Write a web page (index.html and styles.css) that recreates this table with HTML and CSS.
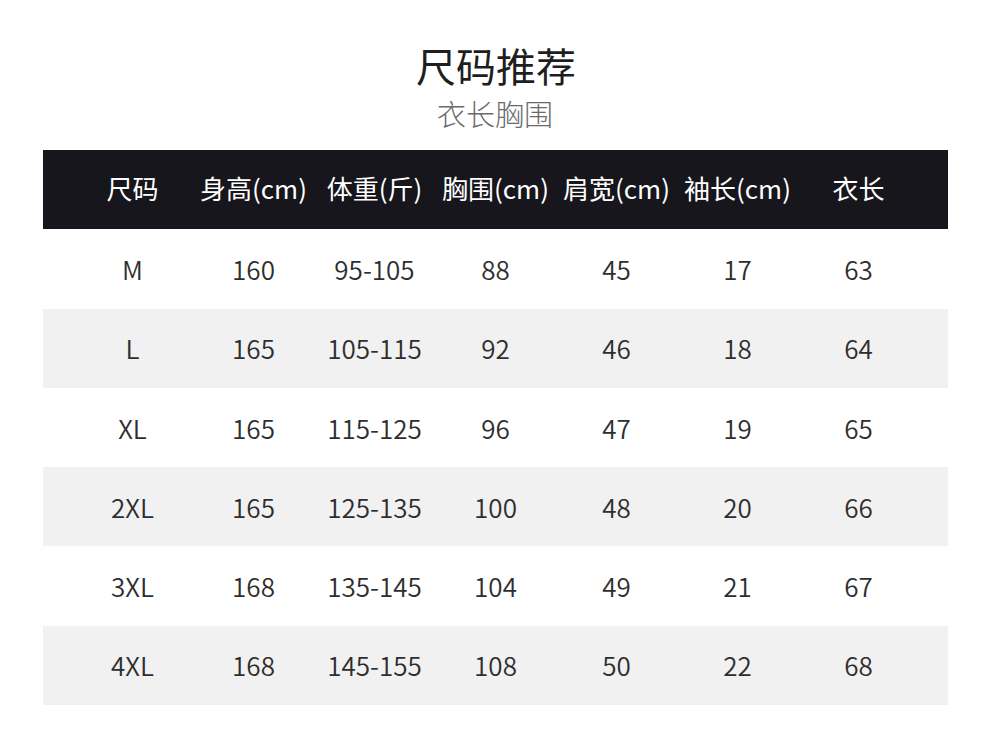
FILE: index.html
```html
<!DOCTYPE html>
<html lang="zh-CN">
<head>
<meta charset="utf-8">
<link rel="stylesheet" href="styles.css">
</head>
<body>
<div class="page">
  <h1 class="title">尺码推荐</h1>
  <p class="subtitle">衣长胸围</p>
  <div class="table">
    <div class="row head">
      <div class="cell">尺码</div><div class="cell">身高(cm)</div><div class="cell">体重(斤)</div><div class="cell">胸围(cm)</div><div class="cell">肩宽(cm)</div><div class="cell">袖长(cm)</div><div class="cell">衣长</div>
    </div>
    <div class="row">
      <div class="cell">M</div><div class="cell">160</div><div class="cell">95-105</div><div class="cell">88</div><div class="cell">45</div><div class="cell">17</div><div class="cell">63</div>
    </div>
    <div class="row alt">
      <div class="cell">L</div><div class="cell">165</div><div class="cell">105-115</div><div class="cell">92</div><div class="cell">46</div><div class="cell">18</div><div class="cell">64</div>
    </div>
    <div class="row">
      <div class="cell">XL</div><div class="cell">165</div><div class="cell">115-125</div><div class="cell">96</div><div class="cell">47</div><div class="cell">19</div><div class="cell">65</div>
    </div>
    <div class="row alt">
      <div class="cell">2XL</div><div class="cell">165</div><div class="cell">125-135</div><div class="cell">100</div><div class="cell">48</div><div class="cell">20</div><div class="cell">66</div>
    </div>
    <div class="row">
      <div class="cell">3XL</div><div class="cell">168</div><div class="cell">135-145</div><div class="cell">104</div><div class="cell">49</div><div class="cell">21</div><div class="cell">67</div>
    </div>
    <div class="row alt">
      <div class="cell">4XL</div><div class="cell">168</div><div class="cell">145-155</div><div class="cell">108</div><div class="cell">50</div><div class="cell">22</div><div class="cell">68</div>
    </div>
  </div>
</div>
</body>
</html>
```
FILE: styles.css
```css
html, body {
  margin: 0;
  padding: 0;
  background: #ffffff;
}
body {
  font-family: "Noto Sans CJK SC", "Noto Sans", sans-serif;
  color: #2b2b2b;
}
.page {
  width: 990px;
  height: 746px;
  padding-top: 40px;
  box-sizing: border-box;
}
.title {
  margin: 0;
  text-align: center;
  font-size: 40px;
  font-weight: 400;
  line-height: 50px;
  color: #1e1e1e;
  padding-left: 2px;
}
.subtitle {
  margin: 5px 0 0;
  text-align: center;
  font-size: 29px;
  font-weight: 300;
  line-height: 36px;
  color: #6a6a6a;
}
.table {
  margin: 19px 0 0 43px;
  width: 905px;
}
.row {
  display: grid;
  grid-template-columns: repeat(7, 121px);
  padding: 0 29px;
  height: 79.3px;
  align-items: center;
}
.row.head {
  background: #16161c;
  color: #ffffff;
}
.row.head .cell {
  font-weight: 400;
  padding-bottom: 4px;
}
.row.alt {
  background: #f1f1f1;
}
.cell {
  text-align: center;
  font-size: 26px;
  font-weight: 350;
  line-height: 32px;
  white-space: nowrap;
  color: #2e2e2e;
}
.row.head .cell {
  color: #ffffff;
}
```
